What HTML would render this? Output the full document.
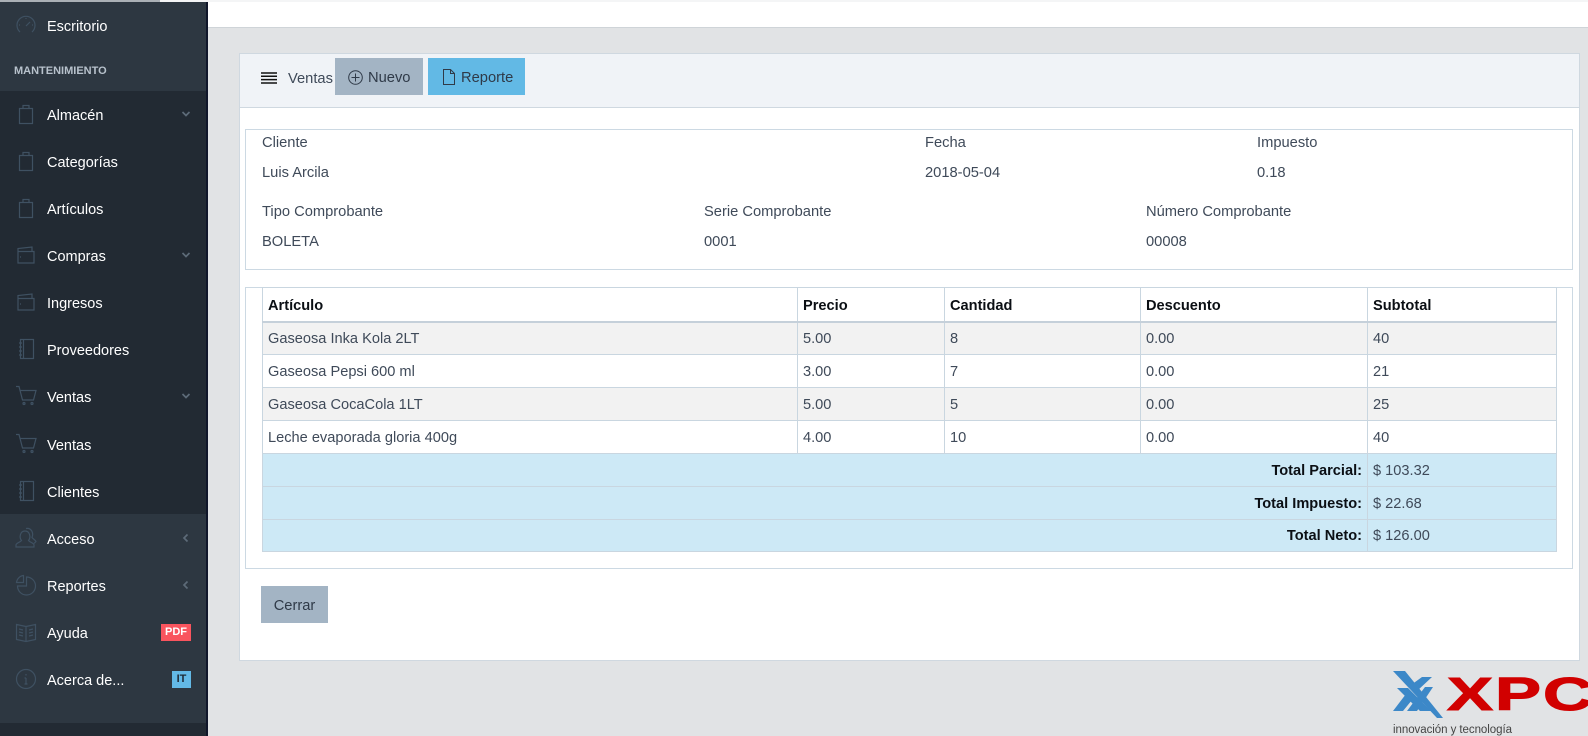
<!DOCTYPE html>
<html lang="es">
<head>
<meta charset="utf-8">
<title>Ventas</title>
<style>
html,body{margin:0;padding:0}
body{width:1588px;height:736px;overflow:hidden;position:relative;background:#e1e3e5;font-family:"Liberation Sans",sans-serif;font-size:14.7px;color:#3f4a59}
div,span,svg,table{position:absolute}
td span,td svg{position:static}
#side{left:0;top:2px;width:208px;height:734px;background:#2d3741;border-right:2px solid #10162a;box-sizing:border-box}
#dark{left:0;top:91px;width:206px;height:423px;background:#222a33}
#dark2{left:0;top:723px;width:206px;height:13px;background:#222a33}
.m{left:47px;color:#fff;font-size:14.5px;line-height:20px;white-space:nowrap}
.h{left:14px;top:63px;color:#b8c2cc;font-size:11px;font-weight:bold;line-height:16px;white-space:nowrap}
.i{left:15px;width:22px;height:22px;fill:none;stroke:#3f5162;stroke-width:1.2}
.c{left:181px;width:10px;height:10px;fill:none;stroke:#5d6b78;stroke-width:1.7}
.b{color:#fff;font-size:11px;font-weight:bold;text-align:center;line-height:17px;height:17px}
.t{white-space:nowrap;line-height:20px}
#top{left:208px;top:2px;width:1380px;height:25px;background:#fff;border-bottom:1px solid #cfd4d8}
#topl{left:0;top:0;width:160px;height:2px;background:#aab0b5}
#topw{left:160px;top:0;width:1428px;height:2px;background:#f4f5f6}
#card{left:239px;top:53px;width:1341px;height:608px;background:#fff;border:1px solid #cfd8e0;box-sizing:border-box}
#head{left:240px;top:54px;width:1339px;height:54px;background:#f0f3f7;border-bottom:1px solid #cfd8e0;box-sizing:border-box}
.btn{height:37px;line-height:41px;font-size:14.7px;color:#2f3a48}
.p{border:1px solid #ccd9e3;box-sizing:border-box;background:#fff}
table{left:262px;top:287px;width:1294px;height:264px;border-collapse:collapse;table-layout:fixed;font-size:14.6px;background:#fff}
td,th{border:1px solid #c9d6e0;padding:2px 5px 0;text-align:left;line-height:20px;overflow:hidden;white-space:nowrap;box-sizing:border-box}
th{color:#0b0f14;font-weight:bold;border-bottom:2px solid #c5d0da;padding-top:4px}
.g td{background:#f2f2f2}
.s td{background:#cde9f6;padding-top:1px}
.s td.r{text-align:right;font-weight:bold;color:#0b0f14}
</style>
</head>
<body>
<div id="side"></div>
<div id="dark"></div>
<div id="dark2"></div>
<div id="topl"></div>
<div id="topw"></div>
<div id="top"></div>

<svg class="i" style="top:14px" viewBox="0 0 22 22"><path d="M5 18A9 9 0 1 1 17 18"/><path d="M11 12l4-4M4 11h1M18 11h-1M11 4v1"/></svg>
<div class="m" style="top:17px">Escritorio</div>
<div class="h">MANTENIMIENTO</div>

<svg class="i" style="top:103px" viewBox="0 0 22 22"><path d="M4.500 5.500h13v15h-13zM8 5.500V2.500h6v3"/></svg>
<div class="m" style="top:106px">Almacén</div>
<svg class="c" style="top:109px" viewBox="0 0 10 10"><path d="M1.500 3l3.500 3.500L8.500 3"/></svg>
<svg class="i" style="top:150px" viewBox="0 0 22 22"><path d="M4.500 5.500h13v15h-13zM8 5.500V2.500h6v3"/></svg>
<div class="m" style="top:153px">Categorías</div>
<svg class="i" style="top:197px" viewBox="0 0 22 22"><path d="M4.500 5.500h13v15h-13zM8 5.500V2.500h6v3"/></svg>
<div class="m" style="top:200px">Artículos</div>

<svg class="i" style="top:244px" viewBox="0 0 22 22"><path d="M3 7.500h16v11.500H3zM3 7.500V4.500l14-1.500v4.500M5 13h1"/></svg>
<div class="m" style="top:247px">Compras</div>
<svg class="c" style="top:250px" viewBox="0 0 10 10"><path d="M1.500 3l3.500 3.500L8.500 3"/></svg>
<svg class="i" style="top:291px" viewBox="0 0 22 22"><path d="M3 7.500h16v11.500H3zM3 7.500V4.500l14-1.500v4.500M5 13h1"/></svg>
<div class="m" style="top:294px">Ingresos</div>

<svg class="i" style="top:338px" viewBox="0 0 22 22"><path d="M5.500 1.500h13v19h-13zM8.500 1.500v19M4 5h3M4 9h3M4 13h3M4 17h3"/></svg>
<div class="m" style="top:341px">Proveedores</div>

<svg class="i" style="top:385px" viewBox="0 0 22 22"><path d="M1 1.500h3l3.500 13.500h11l2.500-9.500H5"/><circle cx="9" cy="18.500" r="1"/><circle cx="17" cy="18.500" r="1"/></svg>
<div class="m" style="top:388px">Ventas</div>
<svg class="c" style="top:391px" viewBox="0 0 10 10"><path d="M1.500 3l3.500 3.500L8.500 3"/></svg>
<svg class="i" style="top:433px" viewBox="0 0 22 22"><path d="M1 1.500h3l3.500 13.500h11l2.500-9.500H5"/><circle cx="9" cy="18.500" r="1"/><circle cx="17" cy="18.500" r="1"/></svg>
<div class="m" style="top:436px">Ventas</div>

<svg class="i" style="top:480px" viewBox="0 0 22 22"><path d="M5.500 1.500h13v19h-13zM8.500 1.500v19M4 5h3M4 9h3M4 13h3M4 17h3"/></svg>
<div class="m" style="top:483px">Clientes</div>

<svg class="i" style="top:527px" viewBox="0 0 22 22"><path d="M1 20v-2c0-2 4-2.500 5.500-4.500C4 10.500 5 4 10 4s6 6.500 3.500 9.500c1.500 2 5.500 2.500 5.500 4.500v2z"/><path d="M11 1.500c5-1 8 4 6 9 1 1.500 3 2 4 4l-2 2"/></svg>
<div class="m" style="top:530px">Acceso</div>
<svg class="c" style="top:533px" viewBox="0 0 10 10"><path d="M6.500 1.500L3 5l3.500 3.500"/></svg>

<svg class="i" style="top:574px" viewBox="0 0 22 22"><path d="M11.500 3A9 9 0 1 1 2.500 12H11.500z"/><path d="M8.500 1.500A8 8 0 0 0 1.500 8.500H8.500z"/></svg>
<div class="m" style="top:577px">Reportes</div>
<svg class="c" style="top:580px" viewBox="0 0 10 10"><path d="M6.500 1.500L3 5l3.500 3.500"/></svg>

<svg class="i" style="top:621px" viewBox="0 0 22 22"><path d="M1.500 3.500l9.500 2 9.500-2v15l-9.500 2-9.500-2zM11 5.500v15M4 8l4 1M4 11l4 1M4 14l4 1M18 8l-4 1M18 11l-4 1M18 14l-4 1"/></svg>
<div class="m" style="top:624px">Ayuda</div>
<div class="b" style="left:161px;top:624px;width:30px;background:#f9545e">PDF</div>

<svg class="i" style="top:668px" viewBox="0 0 22 22"><circle cx="11" cy="11" r="9.500"/><path d="M11 10v6M9.500 16h3M9.500 10H11M11 6v1.500"/></svg>
<div class="m" style="top:671px">Acerca de...</div>
<div class="b" style="left:172px;top:671px;width:19px;background:#63b9e6;color:#1d2a36">IT</div>

<div id="card"></div>
<div id="head"></div>
<svg style="left:261px;top:72px;width:16px;height:12px" viewBox="0 0 16 12"><path d="M0 1h16M0 4.300h16M0 7.600h16M0 11h16" stroke="#111" stroke-width="1.500" fill="none"/></svg>
<div class="t" style="left:288px;top:69px">Ventas</div>
<div class="btn" style="left:335px;top:58px;width:88px;background:#a3b4c4"></div>
<svg style="left:348px;top:70px;width:15px;height:15px" viewBox="0 0 15 15" fill="none" stroke="#2f3a48"><circle cx="7.500" cy="7.500" r="6.800"/><path d="M7.500 3.500v8M3.500 7.500h8"/></svg>
<div class="btn" style="left:368px;top:58px">Nuevo</div>
<div class="btn" style="left:428px;top:58px;width:97px;background:#62b9e5"></div>
<svg style="left:443px;top:69px;width:12px;height:16px" viewBox="0 0 12 16" fill="none" stroke="#2f3a48"><path d="M.500.500h7l4 4v11h-11zM7.500.500v4h4"/></svg>
<div class="btn" style="left:461px;top:58px">Reporte</div>

<div class="p" style="left:245px;top:129px;width:1328px;height:141px"></div>
<div class="t" style="left:262px;top:133px">Cliente</div>
<div class="t" style="left:925px;top:133px">Fecha</div>
<div class="t" style="left:1257px;top:133px">Impuesto</div>
<div class="t" style="left:262px;top:163px">Luis Arcila</div>
<div class="t" style="left:925px;top:163px">2018-05-04</div>
<div class="t" style="left:1257px;top:163px">0.18</div>
<div class="t" style="left:262px;top:202px">Tipo Comprobante</div>
<div class="t" style="left:704px;top:202px">Serie Comprobante</div>
<div class="t" style="left:1146px;top:202px">Número Comprobante</div>
<div class="t" style="left:262px;top:232px">BOLETA</div>
<div class="t" style="left:704px;top:232px">0001</div>
<div class="t" style="left:1146px;top:232px">00008</div>

<div class="p" style="left:245px;top:287px;width:1328px;height:282px"></div>
<table>
<colgroup><col style="width:535px"><col style="width:147px"><col style="width:196px"><col style="width:227px"><col style="width:189px"></colgroup>
<tr style="height:34px"><th>Artículo</th><th>Precio</th><th>Cantidad</th><th>Descuento</th><th>Subtotal</th></tr>
<tr class="g" style="height:33px"><td>Gaseosa Inka Kola 2LT</td><td>5.00</td><td>8</td><td>0.00</td><td>40</td></tr>
<tr style="height:33px"><td>Gaseosa Pepsi 600 ml</td><td>3.00</td><td>7</td><td>0.00</td><td>21</td></tr>
<tr class="g" style="height:33px"><td>Gaseosa CocaCola 1LT</td><td>5.00</td><td>5</td><td>0.00</td><td>25</td></tr>
<tr style="height:33px"><td>Leche evaporada gloria 400g</td><td>4.00</td><td>10</td><td>0.00</td><td>40</td></tr>
<tr class="s" style="height:33px"><td class="r" colspan="4">Total Parcial:</td><td>$ 103.32</td></tr>
<tr class="s" style="height:33px"><td class="r" colspan="4">Total Impuesto:</td><td>$ 22.68</td></tr>
<tr class="s" style="height:32px"><td class="r" colspan="4">Total Neto:</td><td>$ 126.00</td></tr>
</table>

<div class="btn" style="left:261px;top:586px;width:67px;background:#a3b4c4;text-align:center">Cerrar</div>

<svg style="left:1390px;top:668px;width:198px;height:68px;overflow:hidden" viewBox="1390 668 198 68">
<g fill="#3c88c8">
<polygon points="1393,671 1405,671 1443,718 1437,718"/>
<polygon points="1397,688 1408,688 1431,711 1420,711"/>
<polygon points="1422,677 1432,677 1417,691 1411,685"/>
<polygon points="1425,687 1433,687 1417,711 1407,711"/>
<polygon points="1393,711 1403,711 1412,700 1406,694"/>
</g>
<g fill="#d10000" stroke="#d10000" stroke-width="1" font-family="'Liberation Sans',sans-serif" font-weight="bold" font-size="46">
<text transform="translate(1447,710) scale(1.5,1)" x="0" y="0">X</text>
<text transform="translate(1495,710) scale(1.5,1)" x="0" y="0">P</text>
<text transform="translate(1543,710) scale(1.5,1)" x="0" y="0">C</text>
</g>
<text x="1393" y="733" font-family="'Liberation Sans',sans-serif" font-size="11.500" fill="#444" textLength="119">innovación y tecnología</text>
</svg>
</body>
</html>
